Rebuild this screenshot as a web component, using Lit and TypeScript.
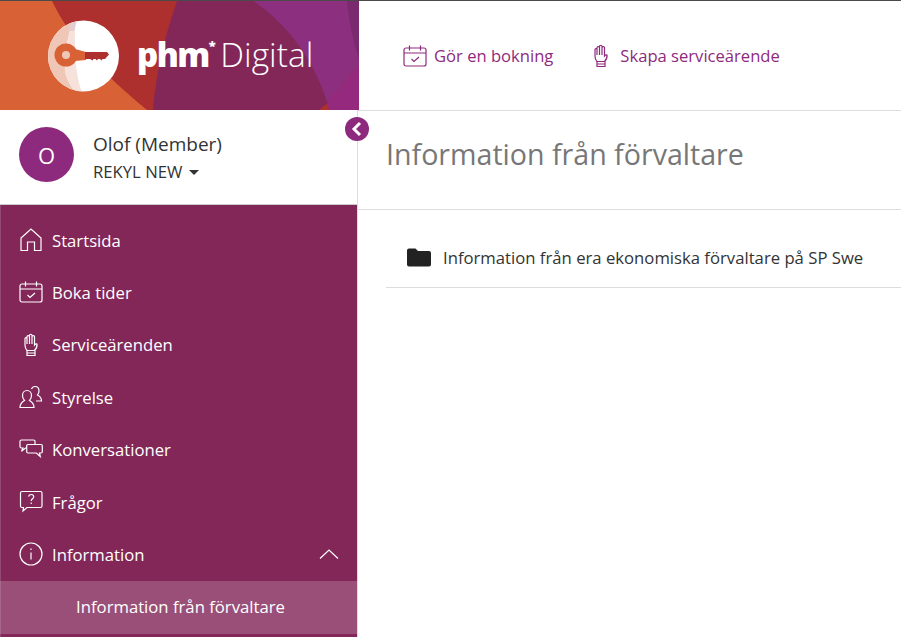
import { LitElement, css, html, svg } from "lit";
import { customElement } from "lit/decorators.js";

const ICONS = {
  home: svg`<path d="M2 22.500V10L12 1l10 9v12.500h-6.500V14h-7v8.500z"/>`,
  calendar: svg`<rect x="1" y="4" width="22" height="18" rx="2"/><path d="M1 9h22M6.500 1.500v5M17.500 1.500v5M8.500 15l2.500 2.500 5-4.500"/>`,
  hand: svg`<path d="M8 17.500c-1.500-1.500-2-3-2-5.500V5.500c0-1.300 2-1.300 2 0V3.500c0-1.300 2.500-1.300 2.500 0V2.200c0-1.300 2.500-1.300 2.500 0v1.300c0-1.300 2.500-1.300 2.500 0v8.500c.7-1 1.500-1.500 2.500-1 .3 2.500-1 5-2.500 6.500zM8 5.500V11M10.500 3.500V11M13 2.500V11M8 17.500v5h8v-5M8 20h8"/>`,
  people: svg`<path d="M1 22.500c0-4 2-5.500 4.500-7-1.500-1.500-2-3.500-2-5 0-3 2-5 4.500-5s4.500 2 4.500 5c0 1.500-.5 3.500-2 5 2.500 1.500 4.500 3 4.500 7zM12.500 4c.5-1.500 2-2.500 3.500-2.500 2.500 0 4 2 4 4.500 0 1.500-.5 3-1.500 4 2 1 4 2.500 4 6h-5.500"/>`,
  chat: svg`<path d="M16 6V3.500C16 2.700 15.500 2 14.500 2h-12C1.500 2 1 2.700 1 3.500v5c0 .8.5 1.500 1.500 1.500H4l-1.500 3.200L6.500 10h1.200"/><path d="M9 6.500h13c.8 0 1.300.5 1.300 1.300v6c0 .7-.5 1.200-1.300 1.200h-1.500l.8 3.500-4-3.500H9c-.8 0-1.300-.5-1.300-1.200v-6c0-.8.5-1.300 1.300-1.300z"/>`,
  question: svg`<path d="M3 1.500h18.500c1 0 1.500.5 1.500 1.500v13c0 1-.5 1.500-1.500 1.500H8L4 21l.5-3.500H3c-1 0-1.500-.5-1.500-1.500V3c0-1 .5-1.500 1.500-1.500z"/><path d="M9.500 6.500c.5-1.500 1.500-2 2.700-2 1.500 0 2.500 1 2.500 2.300 0 2-2.500 2-2.500 4.200M12.200 12.500V14"/>`,
  info: svg`<circle cx="12" cy="12" r="11"/><path d="M12 10.500v7M12 6.500V8"/>`,
};

type IconName = keyof typeof ICONS;

const NAV: { icon: IconName; label: string }[] = [
  { icon: "home", label: "Startsida" },
  { icon: "calendar", label: "Boka tider" },
  { icon: "hand", label: "Serviceärenden" },
  { icon: "people", label: "Styrelse" },
  { icon: "chat", label: "Konversationer" },
  { icon: "question", label: "Frågor" },
  { icon: "info", label: "Information" },
];

function icon(name: IconName) {
  return html`<svg class="icon" viewBox="0 0 24 24">${ICONS[name]}</svg>`;
}

@customElement("app-root")
export class AppRoot extends LitElement {
  private renderBanner() {
    return html`
      <div class="banner">
        <svg class="banner-art" viewBox="0 0 359 109" preserveAspectRatio="none">
          <rect width="359" height="109" fill="#d86136" />
          <path d="M52 0C70 38 105 75 147 109H359V0z" fill="#ad302e" />
          <path d="M177 0C165 35 156 70 153 109H319L329 101V0z" fill="#822758" />
          <path d="M253 0C285 20 315 60 327 101L359 65V0z" fill="#8b2f7e" />
          <path d="M347 0C349 20 353 40 359 58V0z" fill="#7a2a6e" />
          <path d="M327 101L359 65V109H329z" fill="#95297e" />
        </svg>
        <div class="logo">
          <svg class="logo-mark" viewBox="0 0 72 72">
            <defs>
              <clipPath id="disc"><circle cx="35.500" cy="36" r="35.500" /></clipPath>
            </defs>
            <g clip-path="url(#disc)">
              <rect width="72" height="72" fill="#fff" />
              <path d="M0 0H25C20 15 16 35 17 50C18 58 22 65 27 72H0z" fill="#f0c6b7" />
              <path d="M25 0H28C26 15 27 35 28 45C29 55 31 65 34 72H27C22 65 18 58 17 50C16 35 20 15 25 0z" fill="#f6e2db" />
              <path d="M24 0H29L26 11L20 11z" fill="#e4ccd0" />
            </g>
            <circle cx="18" cy="35" r="11.500" fill="#d86136" />
            <path d="M27 29L38 32V40L27 41z" fill="#d86136" />
            <path d="M37 32H59L61 34.500L57 39H54.500L53.500 40.500L52 39H50L49 40.500L47.500 39H45.500L44.500 40.500L42 39H37z" fill="#ad302e" />
            <circle cx="18" cy="35" r="4" fill="#f0c6b7" />
          </svg>
          <span class="phm">phm<sup>*</sup></span>
          <span class="digital">Digital</span>
        </div>
      </div>
    `;
  }

  private renderUser() {
    return html`
      <div class="user">
        <div class="avatar">O</div>
        <div class="user-text">
          <div class="user-name">Olof (Member)</div>
          <div class="user-org">REKYL NEW <span class="caret"></span></div>
        </div>
        <button class="collapse" aria-label="Fäll ihop">
          <svg viewBox="0 0 24 24"><path d="M15 6l-6 6 6 6" /></svg>
        </button>
      </div>
    `;
  }

  render() {
    return html`
      <aside class="sidebar">
        ${this.renderBanner()} ${this.renderUser()}
        <nav class="nav">
          ${NAV.map(
            (item) => html`
              <a class="nav-item">
                ${icon(item.icon)}
                <span>${item.label}</span>
                ${item.label === "Information"
                  ? html`<svg class="chevron" viewBox="0 0 20 10"><path d="M1 9.500l9-8.500 9 8.500" /></svg>`
                  : ""}
              </a>
            `
          )}
          <a class="sub-item">Information från förvaltare</a>
        </nav>
      </aside>
      <main class="main">
        <header class="actions">
          <a class="action">${icon("calendar")}<span>Gör en bokning</span></a>
          <a class="action">${icon("hand")}<span>Skapa serviceärende</span></a>
        </header>
        <div class="title-bar"><h1>Information från förvaltare</h1></div>
        <div class="content">
          <div class="row">
            <svg class="folder" viewBox="0 0 24 18">
              <path d="M0 2a2 2 0 0 1 2-2h6.500l2.500 2.500h11a2 2 0 0 1 2 2V16a2 2 0 0 1-2 2H2a2 2 0 0 1-2-2z" />
            </svg>
            <span>Information från era ekonomiska förvaltare på SP Swe</span>
          </div>
        </div>
      </main>
    `;
  }

  static styles = css`
    :host {
      display: flex;
      width: 901px;
      height: 637px;
      overflow: hidden;
      background: #fff;
      border-top: 1px solid #4a4a4a;
      box-sizing: border-box;
      font-family: "Open Sans", sans-serif;
      color: #333;
    }

    .sidebar {
      flex: none;
      width: 358px;
      display: flex;
      flex-direction: column;
      border-right: 1px solid #ddd;
      box-sizing: border-box;
    }

    .banner {
      flex: none;
      position: relative;
      height: 109px;
      margin-right: -2px;
    }

    .banner-art {
      position: absolute;
      inset: 0;
      width: 100%;
      height: 100%;
    }

    .logo {
      position: relative;
      display: flex;
      align-items: center;
      height: 100%;
      padding-left: 48px;
      color: #fff;
    }

    .logo-mark {
      width: 72px;
      height: 72px;
      margin-right: 17px;
    }

    .phm {
      font-size: 33px;
      font-weight: 800;
      letter-spacing: -1.500px;
      margin-right: 6px;
      margin-top: -3px;
    }

    .phm sup {
      font-size: 13px;
      line-height: 0;
      vertical-align: 17px;
    }

    .digital {
      font-size: 33.600px;
      font-weight: 300;
      margin-top: -4px;
    }

    .user {
      flex: none;
      position: relative;
      display: flex;
      align-items: center;
      height: 95px;
      padding-left: 19px;
      gap: 19px;
      box-sizing: border-box;
      border-bottom: 1px solid #ccc;
    }

    .avatar {
      width: 55px;
      height: 55px;
      margin-bottom: 5px;
      border-radius: 50%;
      background: #8e2a7d;
      color: #fff;
      font-size: 22px;
      display: flex;
      align-items: center;
      justify-content: center;
    }

    .user-name {
      font-size: 19px;
      line-height: 26px;
    }

    .user-org {
      font-size: 16.700px;
      line-height: 24px;
      margin-top: 3px;
    }

    .caret {
      display: inline-block;
      margin-left: 2px;
      vertical-align: 3px;
      border-top: 5px solid #333;
      border-left: 5px solid transparent;
      border-right: 5px solid transparent;
    }

    .collapse {
      position: absolute;
      top: 7px;
      right: -12px;
      width: 24px;
      height: 24px;
      padding: 0;
      border: none;
      border-radius: 50%;
      background: #8e2a7d;
      z-index: 1;
    }

    .collapse svg {
      display: block;
      width: 24px;
      height: 24px;
      fill: none;
      stroke: #fff;
      stroke-width: 3;
    }

    .nav {
      flex: 1;
      background: #822758;
      padding-top: 8.900px;
      box-shadow: inset 1px 0 0 #924a72;
    }

    .nav-item {
      display: flex;
      align-items: center;
      height: 52.400px;
      padding-left: 19px;
      gap: 9px;
      color: #fff;
      font-size: 16.700px;
    }

    .icon {
      flex: none;
      width: 24px;
      height: 24px;
      fill: none;
      stroke: currentColor;
      stroke-width: 1.200;
    }

    .chevron {
      width: 20px;
      height: 10px;
      margin-left: auto;
      margin-right: 18px;
      fill: none;
      stroke: #fff;
      stroke-width: 1.200;
    }

    .sub-item {
      display: flex;
      align-items: center;
      justify-content: center;
      height: 53px;
      box-sizing: border-box;
      padding: 0 0 2px 4px;
      background: #9a4f78;
      box-shadow: inset 1px 0 0 #a8688c;
      color: #fff;
      font-size: 16.700px;
      white-space: nowrap;
    }

    .main {
      flex: 1;
      min-width: 0;
      display: flex;
      flex-direction: column;
    }

    .actions {
      flex: none;
      display: flex;
      align-items: center;
      height: 110px;
      box-sizing: border-box;
      padding: 0 0 0 45px;
      gap: 36px;
      border-bottom: 1px solid #ddd;
    }

    .action {
      display: flex;
      align-items: center;
      gap: 7px;
      color: #8e2a7d;
      font-size: 16.600px;
    }

    .title-bar {
      flex: none;
      height: 99px;
      box-sizing: border-box;
      padding: 0 0 0 28px;
      border-bottom: 1px solid #ddd;
      display: flex;
      align-items: center;
    }

    h1 {
      margin: 0 0 13px;
      font-size: 28.600px;
      font-weight: 400;
      color: #777;
    }

    .content {
      padding-left: 28px;
    }

    .row {
      display: flex;
      align-items: center;
      height: 78px;
      box-sizing: border-box;
      padding: 18px 0 0 21px;
      gap: 12px;
      white-space: nowrap;
      font-size: 16.700px;
      border-bottom: 1px solid #ddd;
    }

    .folder {
      flex: none;
      width: 24px;
      height: 19px;
      fill: #222;
    }
  `;
}
